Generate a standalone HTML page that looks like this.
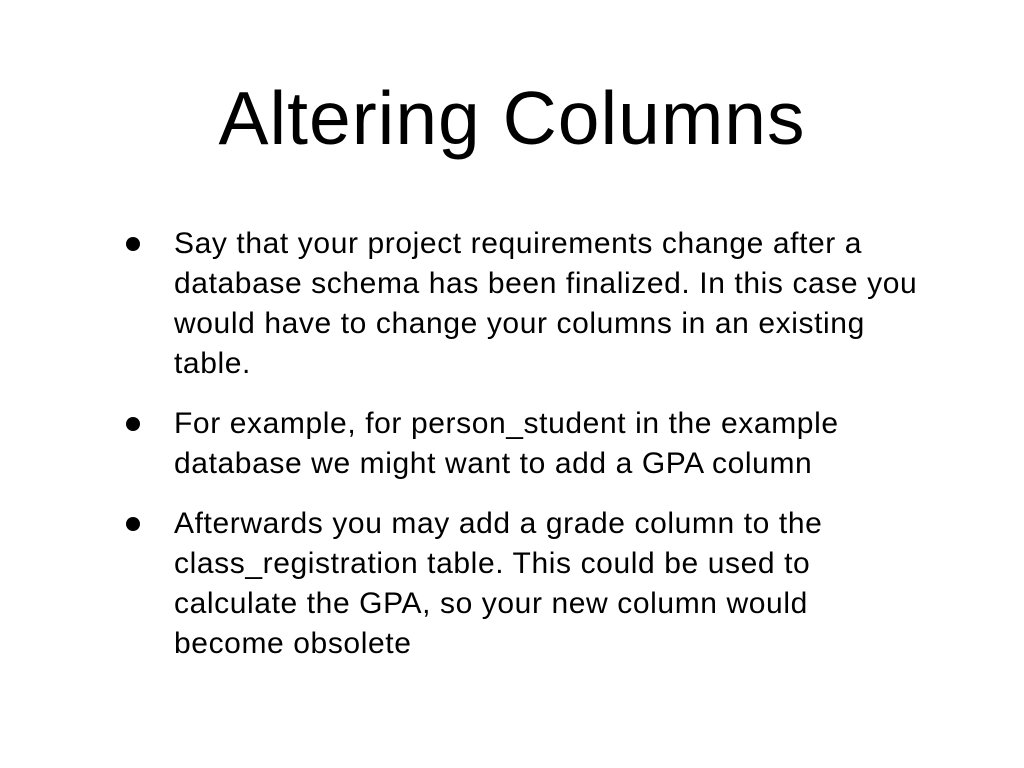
<!DOCTYPE html>
<html><head><style>
body{margin:0;width:1024px;height:768px;background:#fff;font-family:"Liberation Sans",sans-serif;color:#000;position:relative;overflow:hidden}
h1{position:absolute;top:68px;left:0;width:1024px;text-align:center;margin:0;font-weight:normal;font-size:75px;line-height:100px;letter-spacing:1px}
.b{position:absolute;left:174px;font-size:30px;line-height:40px;white-space:nowrap;letter-spacing:0.6px}
.b:before{content:"";position:absolute;left:-48px;top:13px;width:14px;height:14px;border-radius:50%;background:#000}
</style></head><body>
<h1>Altering Columns</h1>
<div class="b" style="top:224px">Say that your project requirements change after a<br>database schema has been finalized. In this case you<br>would have to change your columns in an existing<br>table.</div>
<div class="b" style="top:404px">For example, for person_student in the example<br>database we might want to add a GPA column</div>
<div class="b" style="top:504px">Afterwards you may add a grade column to the<br>class_registration table. This could be used to<br>calculate the GPA, so your new column would<br>become obsolete</div>
</body></html>
